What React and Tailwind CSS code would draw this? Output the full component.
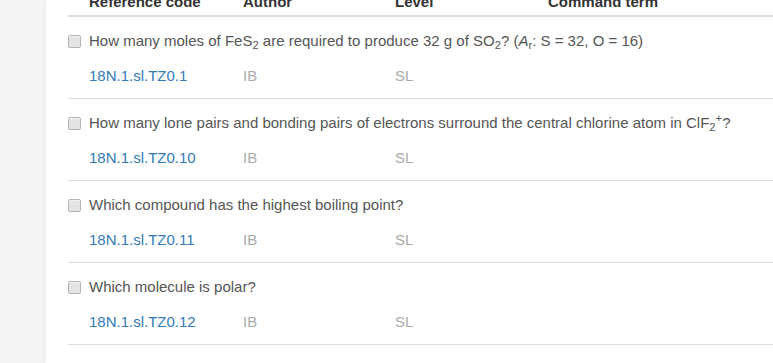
import React from "react";

const rows = [
  {
    code: "18N.1.sl.TZ0.1",
    question: (
      <>
        How many moles of FeS<sub>2</sub> are required to produce 32 g of SO<sub>2</sub>? (
        <i>A</i>
        <sub>r</sub>: S = 32, O = 16)
      </>
    ),
  },
  {
    code: "18N.1.sl.TZ0.10",
    question: (
      <>
        How many lone pairs and bonding pairs of electrons surround the central chlorine atom in ClF
        <sub>2</sub>
        <sup>+</sup>?
      </>
    ),
  },
  { code: "18N.1.sl.TZ0.11", question: "Which compound has the highest boiling point?" },
  { code: "18N.1.sl.TZ0.12", question: "Which molecule is polar?" },
];

function Checkbox() {
  return (
    <span className="w-[13px] h-[13px] shrink-0 rounded-[2px] border border-[#b4b4b4] bg-[#e4e4e4] shadow-[inset_0_1px_1px_rgba(255,255,255,0.6)]" />
  );
}

export default function App() {
  return (
    <div
      className="flex h-[363px] w-[773px] overflow-hidden bg-white text-[15px]"
      style={{ fontFamily: '"Liberation Sans", Arial, sans-serif' }}
    >
      {/* left gutter */}
      <div className="w-[44px] shrink-0 bg-[#f4f4f4] shadow-[1px_0_2px_rgba(0,0,0,0.12)]" />

      <div className="flex-1 pl-[24px]">
        {/* header */}
        <div className="-mt-[8px] flex border-b-2 border-[#dddddd] pb-[3px] pl-[21px] font-bold leading-5 text-[#333]">
          <div className="w-[154px]">Reference code</div>
          <div className="w-[152px]">Author</div>
          <div className="w-[153px]">Level</div>
          <div>Command term</div>
        </div>

        {rows.map((r) => (
          <div key={r.code} className="border-b border-[#dddddd] pt-[14px] pb-[12px]">
            <div className="flex items-center gap-[8px] leading-5 text-[#555]">
              <Checkbox />
              <span>{r.question}</span>
            </div>
            <div className="mt-[15px] flex pl-[21px] leading-5">
              <div className="w-[154px] text-[#337ab7]">{r.code}</div>
              <div className="w-[152px] text-[#aaaaaa]">IB</div>
              <div className="w-[153px] text-[#aaaaaa]">SL</div>
            </div>
          </div>
        ))}
      </div>
    </div>
  );
}
